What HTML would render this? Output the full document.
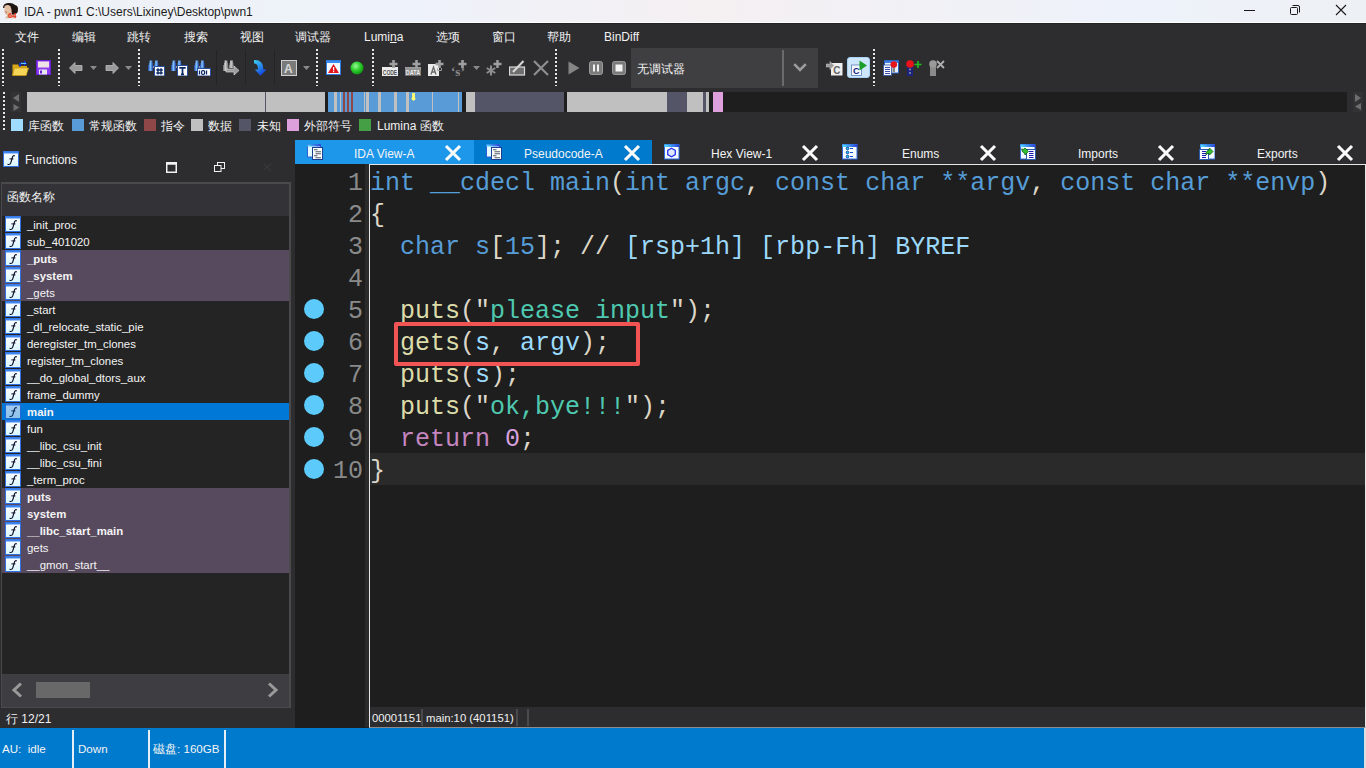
<!DOCTYPE html>
<html><head><meta charset="utf-8">
<style>
*{margin:0;padding:0;box-sizing:border-box}
html,body{width:1366px;height:768px;overflow:hidden;background:#2d2d30;font-family:"Liberation Sans",sans-serif;color:#f0f0f0;position:relative}
.a{position:absolute}
svg{position:absolute;display:block}
#title{left:0;top:0;width:1366px;height:23px;background:linear-gradient(90deg,#eef2f6 0%,#eef2fa 30%,#f5f0f2 52%,#f1f1f6 68%,#eef2fa 82%,#edf1f5 100%);border-bottom:1px solid #fdfdfd}
#tline{left:0;top:23px;width:1366px;height:1px;background:#232325}
.tt{top:5px;left:24px;font-size:12px;color:#1b1b1b;white-space:nowrap;line-height:14px}
.mi{position:absolute;top:30px;font-size:12px;line-height:14px;color:#f1f1f1;white-space:nowrap}
.dsep{position:absolute;width:2px;background:repeating-linear-gradient(180deg,#e6e6e6 0 2px,transparent 2px 4px)}
.lsep{position:absolute;width:1px;background:#232325}
.lg{position:absolute;top:119px;width:12px;height:12px}
.fn{font-size:11.4px;line-height:14px;color:#f4f4f4;white-space:nowrap}
.ln{left:295px;width:70px;text-align:right;font-family:"Liberation Mono",monospace;font-size:25px;line-height:32px;color:#8a8a8a;padding-right:2px}
.cl{left:370px;font-family:"Liberation Mono",monospace;font-size:25px;line-height:32px;white-space:pre}
.tabt{top:147px;font-size:12px;line-height:14px;color:#f4f4f4;white-space:nowrap}
.st2{font-size:11.3px;line-height:14px;color:#f1f1f1;white-space:nowrap}
.sbt{top:742px;font-size:11.6px;line-height:14px;color:#f4f4f4;white-space:nowrap}
.lt{position:absolute;top:119px;font-size:12px;line-height:14px;color:#f1f1f1;white-space:nowrap}
</style></head><body>
<!-- TITLE BAR -->
<div id="title" class="a"></div><div id="tline" class="a"></div>
<svg style="left:0px;top:0px" width="22" height="22" viewBox="0 0 22 22">
  <path d="M3 8 Q3 3.5 8 3 Q13 2.5 15 5 Q18 5.5 18 9 Q18.5 12 16 14 L12 15 Q11 9 9 7 Z" fill="#1e1412"/>
  <path d="M4.5 6 Q8 4 10.5 6.5 Q12 10 11.5 13 Q10.5 15.5 8 15.5 Q5 15 4.5 12 Z" fill="#e3c0a4"/>
  <path d="M5.5 11.5 Q6 12.8 7 12.3" stroke="#a0504a" stroke-width="0.9" fill="none"/>
  <path d="M5 18.5 Q9 17.5 16 18.5 L16 15 L8 14 Z" fill="#d9b59c"/>
  <text x="8" y="18" font-size="7.5" fill="#e8341f" font-family="Liberation Sans" font-weight="700">64</text>
</svg>
<div class="a tt">IDA - pwn1 C:\Users\Lixiney\Desktop\pwn1</div>
<svg style="left:1244px;top:10px" width="12" height="2"><rect x="0" y="0" width="11" height="1" fill="#1a1a1a"/></svg>
<svg style="left:1289px;top:4px" width="12" height="12" viewBox="0 0 12 12"><rect x="1.5" y="3.5" width="7" height="7" rx="1" fill="none" stroke="#1a1a1a" stroke-width="1"/><path d="M3.5 1.5 H9 Q10.5 1.5 10.5 3 V8.5" fill="none" stroke="#1a1a1a" stroke-width="1"/></svg>
<svg style="left:1335px;top:4px" width="12" height="12" viewBox="0 0 12 12"><path d="M1 1 L11 11 M11 1 L1 11" stroke="#1a1a1a" stroke-width="1.1"/></svg>

<!-- MENU -->
<div class="mi" style="left:15px">文件</div>
<div class="mi" style="left:72px">编辑</div>
<div class="mi" style="left:127px">跳转</div>
<div class="mi" style="left:184px">搜索</div>
<div class="mi" style="left:240px">视图</div>
<div class="mi" style="left:295px">调试器</div>
<div class="mi" style="left:364px">Lumi<u style="text-underline-offset:1px">n</u>a</div>
<div class="mi" style="left:436px">选项</div>
<div class="mi" style="left:492px">窗口</div>
<div class="mi" style="left:547px">帮助</div>
<div class="mi" style="left:604px">BinDiff</div>

<!-- TOOLBAR -->
<div class="dsep" style="left:2px;top:49px;height:37px"></div>
<div class="dsep" style="left:58px;top:49px;height:37px"></div>
<div class="dsep" style="left:138px;top:49px;height:37px"></div>
<div class="dsep" style="left:316px;top:49px;height:37px"></div>
<div class="dsep" style="left:372px;top:49px;height:37px"></div>
<div class="dsep" style="left:555px;top:49px;height:37px"></div>
<div class="dsep" style="left:873px;top:49px;height:37px"></div>
<div class="lsep" style="left:216px;top:50px;height:35px"></div>
<div class="lsep" style="left:245px;top:50px;height:35px"></div>
<div class="lsep" style="left:274px;top:50px;height:35px"></div>
<!-- folder -->
<svg style="left:12px;top:60px" width="17" height="16" viewBox="0 0 17 16">
 <path d="M0.5 4.5 H6.5 V6 H15 V15 H0.5 Z" fill="#d8a818"/>
 <path d="M2.5 8 H16.5 L14 15.5 H0.5 Z" fill="#f7d75a" stroke="#c99b12" stroke-width="0.8"/>
 <path d="M7.2 6.8 V3.6 Q7.2 2.6 8.5 2.6 H12 V0.3 L15.2 3.2 L12 6.2 V4.2 H9 V6.8 Z" fill="#1530d0"/><path d="M9 3.4 H14" stroke="#70f0ff" stroke-width="0.9"/>
</svg>
<!-- floppy -->
<svg style="left:36px;top:60px" width="16" height="16" viewBox="0 0 16 16">
 <rect x="0" y="0" width="15" height="15" fill="#6a1fd0"/>
 <rect x="1" y="1" width="13" height="13" fill="#8e3cf0"/>
 <rect x="2" y="1.5" width="11" height="6" fill="#efe2e6"/>
 <rect x="3" y="9.5" width="8" height="5" fill="#e8e8f0"/>
 <rect x="4" y="10.5" width="2" height="3" fill="#6a1fd0"/>
</svg>
<!-- back / fwd -->
<svg style="left:69px;top:62px" width="14" height="12" viewBox="0 0 14 12"><path d="M0.5 6 L6 0.5 V3.5 H13 V8.5 H6 V11.5 Z" fill="#9a9a9a" stroke="#bdbdbd" stroke-width="0.8"/></svg>
<svg style="left:90px;top:66px" width="8" height="5" viewBox="0 0 8 5"><path d="M0 0 H7 L3.5 4 Z" fill="#8a8a8a"/></svg>
<svg style="left:105px;top:62px" width="14" height="12" viewBox="0 0 14 12"><path d="M13.5 6 L8 0.5 V3.5 H1 V8.5 H8 V11.5 Z" fill="#9a9a9a" stroke="#bdbdbd" stroke-width="0.8"/></svg>
<svg style="left:125px;top:66px" width="8" height="5" viewBox="0 0 8 5"><path d="M0 0 H7 L3.5 4 Z" fill="#8a8a8a"/></svg>
<!-- binocular icons -->
<svg width="0" height="0" style="left:0;top:0"><defs>
<linearGradient id="bl" x1="0" y1="0" x2="1" y2="0"><stop offset="0" stop-color="#1c3aa0"/><stop offset="0.45" stop-color="#7fc8ff"/><stop offset="1" stop-color="#1a2f90"/></linearGradient>
<linearGradient id="bg2" x1="0" y1="0" x2="1" y2="0"><stop offset="0" stop-color="#6a6a6a"/><stop offset="0.45" stop-color="#d0d0d0"/><stop offset="1" stop-color="#707070"/></linearGradient>
<symbol id="bino" viewBox="0 0 17 16">
<path d="M1.5 0.5 H4.5 V3 H5 V5 H5.2 V11 H0 V5 H1 V3 H1.5 Z" fill="url(#bl)"/>
<path d="M7 0.5 H10 V3 H10.5 V5 H10.8 V8 H5.8 V5 H6.5 V3 H7 Z" fill="url(#bl)"/>
<rect x="5" y="6.5" width="1" height="1" fill="#f0f0f0"/>
</symbol>
<symbol id="binog" viewBox="0 0 17 16">
<path d="M1.5 0.5 H4.5 V3 H5 V5 H5.2 V11 H0 V5 H1 V3 H1.5 Z" fill="url(#bg2)"/>
<path d="M7 0.5 H10 V3 H10.5 V5 H10.8 V8 H5.8 V5 H6.5 V3 H7 Z" fill="url(#bg2)"/>
</symbol></defs></svg>
<svg style="left:148px;top:60px" width="17" height="16" viewBox="0 0 17 16">
 <use href="#bino" width="17" height="16"/>
 <rect x="6.5" y="6.5" width="10" height="9.5" fill="#fff" stroke="#2a4f9a"/>
 <path d="M10 8.3 V14.5 M13 8.3 V14.5 M8.3 10 H14.8 M8.3 13 H14.8" stroke="#0e2a66" stroke-width="1.4"/>
</svg>
<svg style="left:171px;top:60px" width="17" height="16" viewBox="0 0 17 16">
 <use href="#bino" width="17" height="16"/>
 <rect x="6.5" y="5.5" width="10" height="10.5" fill="#fff" stroke="#2a4f9a"/>
 <path d="M8.3 7.8 H14.7 M11.5 7.8 V14.3 M10 14.3 H13" stroke="#0e2a66" stroke-width="1.7"/>
</svg>
<svg style="left:194px;top:60px" width="17" height="16" viewBox="0 0 17 16">
 <use href="#bino" width="17" height="16"/>
 <rect x="3.5" y="8.5" width="13" height="7.5" fill="#fff" stroke="#2a4f9a"/>
 <path d="M5.5 10.5 V14.5 M12.5 10.5 V14.5" stroke="#0e2a66" stroke-width="1.3"/>
 <rect x="7.6" y="10.6" width="3" height="3.8" rx="1.2" fill="none" stroke="#0e2a66" stroke-width="1.2"/>
</svg>
<svg style="left:223px;top:60px" width="17" height="16" viewBox="0 0 17 16">
 <use href="#binog" width="17" height="16"/>
 <path d="M3 9 H11 V6 L16 10.5 L11 15 V12 H3 Z" fill="#9c9c9c" stroke="#d0d0d0" stroke-width="0.7"/>
</svg>
<!-- blue curved arrow -->
<svg style="left:253px;top:59px" width="15" height="18" viewBox="0 0 15 18">
 <defs><linearGradient id="ba" x1="0" y1="0" x2="0.6" y2="1"><stop offset="0" stop-color="#3fd0f0"/><stop offset="0.5" stop-color="#2a8ae8"/><stop offset="1" stop-color="#1040e0"/></linearGradient></defs>
 <path d="M1 1 Q10.5 0.5 10.5 10.5 L13.5 10.5 L7.5 16.8 L1.8 10.5 L5 10.5 Q5 4 1 4.5 Z" fill="url(#ba)"/>
</svg>
<!-- A box -->
<svg style="left:281px;top:60px" width="17" height="16" viewBox="0 0 17 16">
 <rect x="0.5" y="0.5" width="15" height="15" fill="#7a7a7a" stroke="#cfcfcf"/>
 <text x="3" y="13" font-size="12" font-weight="700" fill="#d8d8d8" font-family="Liberation Sans">A</text>
</svg>
<svg style="left:303px;top:66px" width="8" height="5" viewBox="0 0 8 5"><path d="M0 0 H7 L3.5 4 Z" fill="#8a8a8a"/></svg>
<!-- warning window -->
<svg style="left:326px;top:60px" width="16" height="16" viewBox="0 0 16 16">
 <rect x="0.5" y="0.5" width="14" height="14" fill="#f2f8ff" stroke="#2f7ce0"/>
 <rect x="1" y="1" width="13" height="2" fill="#3a8cf0"/>
 <path d="M7.5 4 L13 13 H2 Z" fill="#e0161b"/>
 <rect x="7" y="7" width="1.2" height="3.5" fill="#fff"/><rect x="7" y="11" width="1.2" height="1.2" fill="#fff"/>
</svg>
<!-- green ball -->
<svg style="left:350px;top:61px" width="14" height="14" viewBox="0 0 14 14">
 <defs><radialGradient id="gb" cx="0.4" cy="0.35" r="0.7"><stop offset="0" stop-color="#9af79a"/><stop offset="0.5" stop-color="#2dcf2d"/><stop offset="1" stop-color="#0e8a10"/></radialGradient></defs>
 <circle cx="7" cy="7" r="6.5" fill="url(#gb)"/>
</svg>
<!-- CODE+ DATA+ -->
<svg style="left:382px;top:60px" width="17" height="16" viewBox="0 0 17 16">
 <rect x="0" y="7" width="16" height="9" fill="#ececec"/>
 <text x="0.8" y="14.6" font-size="8" font-weight="700" fill="#505050" font-family="Liberation Sans" textLength="14.4" lengthAdjust="spacingAndGlyphs">CODE</text>
 <path d="M11.5 0 V8 M7.5 4 H15.5" stroke="#a0a0a0" stroke-width="2.6"/>
</svg>
<svg style="left:405px;top:60px" width="17" height="16" viewBox="0 0 17 16">
 <defs><linearGradient id="dg" x1="0" y1="0" x2="0" y2="1"><stop offset="0" stop-color="#a0a0a0"/><stop offset="1" stop-color="#6a6a6a"/></linearGradient></defs>
 <rect x="0" y="7" width="16" height="9" fill="url(#dg)"/>
 <text x="0.8" y="14.6" font-size="8" font-weight="700" fill="#f0f0f0" font-family="Liberation Sans" textLength="14.4" lengthAdjust="spacingAndGlyphs">DATA</text>
 <path d="M11.5 0 V8 M7.5 4 H15.5" stroke="#a0a0a0" stroke-width="2.6"/>
</svg>
<!-- A+ -->
<svg style="left:428px;top:60px" width="17" height="16" viewBox="0 0 17 16">
 <rect x="0" y="4" width="11" height="12" fill="#ececec"/>
 <path d="M3 14.5 L5.5 7 L8 14.5 M4 12 H7" stroke="#6a6a6a" stroke-width="1.3" fill="none"/>
 <path d="M11.5 0 V8 M7.5 4 H15.5" stroke="#a0a0a0" stroke-width="2.6"/>
 <path d="M9.5 8.5 V10.5 H13.5 V8" stroke="#9a9a9a" stroke-width="1" fill="none"/>
</svg>
<!-- 's'+ -->
<svg style="left:451px;top:60px" width="17" height="16" viewBox="0 0 17 16">
 <text x="0" y="15.5" font-size="13" font-weight="700" fill="#8c8c8c" font-family="Liberation Serif">‘s’</text>
 <path d="M11.5 0 V8 M7.5 4 H15.5" stroke="#a0a0a0" stroke-width="2.6"/>
</svg>
<svg style="left:473px;top:66px" width="8" height="5" viewBox="0 0 8 5"><path d="M0 0 H7 L3.5 4 Z" fill="#8a8a8a"/></svg>
<!-- *+ -->
<svg style="left:486px;top:60px" width="17" height="16" viewBox="0 0 17 16">
 <path d="M5 5.5 V15.5 M0.7 8 L9.3 13 M0.7 13 L9.3 8" stroke="#8e8e8e" stroke-width="2"/>
 <path d="M11.5 0 V8 M7.5 4 H15.5" stroke="#a0a0a0" stroke-width="2.4"/>
</svg>
<!-- edit -->
<svg style="left:509px;top:60px" width="17" height="16" viewBox="0 0 17 16">
 <rect x="0.5" y="7" width="15" height="8" fill="#6e6e6e" stroke="#dadada" stroke-width="1.2"/>
 <path d="M4 12 L14.5 1" stroke="#d8d8d8" stroke-width="2"/>
</svg>
<!-- X -->
<svg style="left:533px;top:60px" width="16" height="16" viewBox="0 0 16 16"><path d="M1 1 L15 15 M15 1 L1 15" stroke="#8e8e8e" stroke-width="2.2"/></svg>
<!-- play pause stop -->
<svg style="left:568px;top:61px" width="12" height="14" viewBox="0 0 12 14"><path d="M0.5 0.5 L11.5 7 L0.5 13.5 Z" fill="#858585"/></svg>
<svg style="left:589px;top:61px" width="14" height="14" viewBox="0 0 14 14"><rect x="0.5" y="0.5" width="13" height="13" rx="2" fill="#7a7a7a" stroke="#9a9a9a"/><rect x="4" y="3.5" width="2" height="7" fill="#f0f0f0"/><rect x="8" y="3.5" width="2" height="7" fill="#f0f0f0"/></svg>
<svg style="left:612px;top:61px" width="14" height="14" viewBox="0 0 14 14"><rect x="0.5" y="0.5" width="13" height="13" rx="2" fill="#7a7a7a" stroke="#9a9a9a"/><rect x="3.5" y="3.5" width="7" height="7" fill="#f4f4f4"/></svg>
<!-- debugger combo -->
<div class="a" style="left:631px;top:48px;width:187px;height:40px;background:#3f3f41"></div>
<div class="a" style="left:782px;top:50px;width:2px;height:36px;background:#6a6a6a"></div>
<div class="a" style="left:637px;top:62px;font-size:12px;line-height:14px;color:#f1f1f1">无调试器</div>
<svg style="left:793px;top:63px" width="14" height="9" viewBox="0 0 14 9"><path d="M1.2 1.2 L7 7 L12.8 1.2" stroke="#9c9c9c" stroke-width="2.6" fill="none"/></svg>
<!-- right icons -->
<svg style="left:826px;top:60px" width="18" height="16" viewBox="0 0 18 16">
 <rect x="5" y="3" width="11.5" height="12.5" fill="#eeeeee"/>
 <text x="7.3" y="13.5" font-size="10" font-weight="700" fill="#666" font-family="Liberation Sans">C</text>
 <path d="M0 4 H4 V1.5 L8 5.5 L4 9.5 V7 H0 Z" fill="#9a9a9a" stroke="#cacaca" stroke-width="0.5"/>
</svg>
<div class="a" style="left:847px;top:57px;width:23px;height:21px;background:#cde6fb;border-radius:3px;border:1px solid #a9d2f4"></div>
<svg style="left:850px;top:60px" width="18" height="16" viewBox="0 0 18 16">
 <rect x="1.5" y="5" width="10" height="10.5" fill="#f4f8ff" stroke="#5a7fb8" stroke-width="0.8"/>
 <text x="3" y="14" font-size="9" font-weight="700" fill="#101c80" font-family="Liberation Sans">C</text>
 <path d="M9.5 0.5 L17 5.5 L9.5 10.5 Z" fill="#1aa028"/>
</svg>
<svg style="left:883px;top:60px" width="17" height="16" viewBox="0 0 17 16">
 <rect x="1.5" y="0.5" width="14" height="12.5" fill="#e6f0ff" stroke="#2d63c0"/>
 <rect x="2" y="1" width="13" height="2" fill="#3d7fe0"/>
 <rect x="0.5" y="5" width="8" height="10.5" fill="#f8f8ff" stroke="#2d4fa0" stroke-width="0.8"/>
 <path d="M2 7.5 H7 M2 9.5 H7 M2 11.5 H7 M2 13.5 H7" stroke="#2438a0" stroke-width="0.9"/>
 <rect x="9.5" y="6" width="2.5" height="6" fill="#888"/>
 <circle cx="10.8" cy="4.5" r="3.3" fill="#e8141a"/>
</svg>
<svg style="left:906px;top:60px" width="17" height="16" viewBox="0 0 17 16">
 <rect x="1" y="6" width="6" height="10" fill="#1a237e"/>
 <circle cx="4" cy="9.5" r="1" fill="#999"/><circle cx="4" cy="13" r="1" fill="#999"/>
 <circle cx="4" cy="4" r="3.8" fill="#e8141a"/>
 <path d="M12 1 V8 M8.5 4.5 H15.5" stroke="#22c022" stroke-width="1.6"/>
</svg>
<svg style="left:929px;top:60px" width="17" height="16" viewBox="0 0 17 16">
 <rect x="1" y="6" width="6" height="10" fill="#8a8a8a"/>
 <circle cx="4" cy="4" r="3.8" fill="#9a9a9a"/>
 <path d="M8 1 L15 8 M15 1 L8 8" stroke="#b0b0b0" stroke-width="1.8"/>
</svg>


<!-- NAV -->
<div class="dsep" style="left:3px;top:92px;height:38px"></div>
<div class="a" style="left:11px;top:92px;width:10px;height:20px;background:#333336"></div>
<svg style="left:12px;top:93px" width="8" height="18" viewBox="0 0 8 18"><path d="M7 1 L1 5 L7 9 Z" fill="#6e6e70"/><path d="M1.5 11 L7.5 14.5 L1.5 18 Z" fill="#6e6e70"/></svg>
<div class="a" style="left:27px;top:92px;width:1320px;height:20px;background:#1e1e1e"></div>
<div class="a" style="left:27px;top:92px;width:298px;height:20px;background:#c0c0c0"></div>
<div class="a" style="left:265px;top:92px;width:1px;height:20px;background:#555568"></div>
<div class="a" style="left:328px;top:92px;width:134px;height:20px;background:#589bd6"></div>
<div class="a" style="left:334px;top:92px;width:3px;height:20px;background:#c0c0c0"></div>
<div class="a" style="left:340px;top:92px;width:1px;height:20px;background:#c0c0c0"></div>
<div class="a" style="left:343px;top:92px;width:2px;height:20px;background:#8f4747"></div>
<div class="a" style="left:347px;top:92px;width:2px;height:20px;background:#8f4747"></div>
<div class="a" style="left:351px;top:92px;width:2px;height:20px;background:#8f4747"></div>
<div class="a" style="left:364px;top:92px;width:1px;height:20px;background:#c0c0c0"></div>
<div class="a" style="left:366px;top:92px;width:3px;height:20px;background:#c0c0c0"></div>
<div class="a" style="left:378px;top:92px;width:3px;height:20px;background:#c0c0c0"></div>
<div class="a" style="left:394px;top:92px;width:3px;height:20px;background:#c0c0c0"></div>
<div class="a" style="left:406px;top:92px;width:3px;height:20px;background:#c0c0c0"></div>
<div class="a" style="left:432px;top:92px;width:1px;height:20px;background:#c0c0c0"></div>
<div class="a" style="left:458px;top:92px;width:1px;height:20px;background:#c0c0c0"></div>
<svg style="left:410px;top:93px" width="7" height="9" viewBox="0 0 7 9"><path d="M2.1 0 H4.9 V5.4 H6.2 L3.5 8 L0.8 5.4 H2.1 Z" fill="#ffff6e"/></svg>
<div class="a" style="left:466px;top:92px;width:9px;height:20px;background:#c0c0c0"></div>
<div class="a" style="left:475px;top:92px;width:89px;height:20px;background:#555568"></div>
<div class="a" style="left:567px;top:92px;width:100px;height:20px;background:#c0c0c0"></div>
<div class="a" style="left:667px;top:92px;width:20px;height:20px;background:#555568"></div>
<div class="a" style="left:687px;top:92px;width:16px;height:20px;background:#c0c0c0"></div>
<div class="a" style="left:703px;top:92px;width:3px;height:20px;background:#555568"></div>
<div class="a" style="left:706px;top:92px;width:3px;height:20px;background:#c0c0c0"></div>
<div class="a" style="left:713px;top:92px;width:10px;height:20px;background:#dda0dd"></div>
<div class="a" style="left:1353px;top:92px;width:10px;height:20px;background:#333336"></div>
<svg style="left:1354px;top:93px" width="8" height="18" viewBox="0 0 8 18"><path d="M1 1 L7 5 L1 9 Z" fill="#6e6e70"/><path d="M7 10 L1 13.5 L7 17 Z" fill="#6e6e70"/></svg>


<!-- LEGEND -->
<div class="lg" style="left:11px;background:#9fdcff"></div><div class="lt" style="left:28px">库函数</div>
<div class="lg" style="left:72px;background:#589bd6"></div><div class="lt" style="left:89px">常规函数</div>
<div class="lg" style="left:144px;background:#8f4747"></div><div class="lt" style="left:161px">指令</div>
<div class="lg" style="left:191px;background:#c0c0c0"></div><div class="lt" style="left:208px">数据</div>
<div class="lg" style="left:239px;background:#555568"></div><div class="lt" style="left:257px">未知</div>
<div class="lg" style="left:287px;background:#dda0dd"></div><div class="lt" style="left:304px">外部符号</div>
<div class="lg" style="left:359px;background:#45a045"></div><div class="lt" style="left:377px">Lumina 函数</div>


<!-- FUNCTIONS -->
<svg width="0" height="0" style="left:0;top:0"><defs>
<linearGradient id="fi" x1="0" y1="0" x2="0" y2="1"><stop offset="0" stop-color="#ffffff"/><stop offset="1" stop-color="#d8f6ff"/></linearGradient>
<symbol id="ficon" viewBox="0 0 16 16">
<rect x="0.5" y="0.5" width="15" height="15" fill="url(#fi)" stroke="#2f6fe0"/>
<rect x="1" y="0.5" width="14" height="2" fill="#3f86f0"/>
<path d="M11.8 4.9 Q10.4 4.1 9.6 5.8 L7.7 12.1 Q7.1 13.9 4.6 13.4" fill="none" stroke="#0b0b25" stroke-width="1.15"/>
<path d="M6.4 7.9 H10.4" stroke="#0b0b25" stroke-width="1"/>
</symbol></defs></svg>
<svg style="left:3px;top:151px" width="16" height="16"><use href="#ficon"/></svg>
<div class="a" style="left:25px;top:153px;font-size:12px;line-height:14px;color:#f1f1f1">Functions</div>
<svg style="left:166px;top:162px" width="11" height="11" viewBox="0 0 11 11"><rect x="0.75" y="0.75" width="9.5" height="9.5" fill="none" stroke="#f2f2f2" stroke-width="1.5"/><rect x="0.75" y="0.75" width="9.5" height="2" fill="#f2f2f2"/></svg>
<svg style="left:214px;top:162px" width="11" height="10" viewBox="0 0 11 10"><rect x="3.5" y="0.5" width="7" height="6" fill="none" stroke="#f2f2f2" stroke-width="1"/><rect x="0.5" y="3.5" width="6.5" height="6" fill="#2d2d30" stroke="#f2f2f2" stroke-width="1"/></svg>
<svg style="left:263px;top:163px" width="9" height="8" viewBox="0 0 9 8"><path d="M0.5 0.5 L8 7.5 M8 0.5 L0.5 7.5" stroke="#3e3e42" stroke-width="1"/></svg>
<div class="a" style="left:1px;top:182px;width:290px;height:526px;background:#4a4a4c"></div>
<div class="a" style="left:2px;top:184px;width:287px;height:490px;background:#242424"></div>
<div class="a" style="left:2px;top:184px;width:287px;height:32px;background:#333337"></div>
<div class="a" style="left:7px;top:190px;font-size:12px;line-height:14px;color:#f1f1f1">函数名称</div>

<svg style="left:5px;top:216px" width="16" height="16"><use href="#ficon"/></svg>
<div class="a fn" style="left:27px;top:218px;">_init_proc</div>
<svg style="left:5px;top:233px" width="16" height="16"><use href="#ficon"/></svg>
<div class="a fn" style="left:27px;top:235px;">sub_401020</div>
<div class="a" style="left:2px;top:250px;width:287px;height:17px;background:#574a5e"></div>
<svg style="left:5px;top:250px" width="16" height="16"><use href="#ficon"/></svg>
<div class="a fn" style="left:27px;top:252px;font-weight:700;">_puts</div>
<div class="a" style="left:2px;top:267px;width:287px;height:17px;background:#574a5e"></div>
<svg style="left:5px;top:267px" width="16" height="16"><use href="#ficon"/></svg>
<div class="a fn" style="left:27px;top:269px;font-weight:700;">_system</div>
<div class="a" style="left:2px;top:284px;width:287px;height:17px;background:#574a5e"></div>
<svg style="left:5px;top:284px" width="16" height="16"><use href="#ficon"/></svg>
<div class="a fn" style="left:27px;top:286px;">_gets</div>
<svg style="left:5px;top:301px" width="16" height="16"><use href="#ficon"/></svg>
<div class="a fn" style="left:27px;top:303px;">_start</div>
<svg style="left:5px;top:318px" width="16" height="16"><use href="#ficon"/></svg>
<div class="a fn" style="left:27px;top:320px;">_dl_relocate_static_pie</div>
<svg style="left:5px;top:335px" width="16" height="16"><use href="#ficon"/></svg>
<div class="a fn" style="left:27px;top:337px;">deregister_tm_clones</div>
<svg style="left:5px;top:352px" width="16" height="16"><use href="#ficon"/></svg>
<div class="a fn" style="left:27px;top:354px;">register_tm_clones</div>
<svg style="left:5px;top:369px" width="16" height="16"><use href="#ficon"/></svg>
<div class="a fn" style="left:27px;top:371px;">__do_global_dtors_aux</div>
<svg style="left:5px;top:386px" width="16" height="16"><use href="#ficon"/></svg>
<div class="a fn" style="left:27px;top:388px;">frame_dummy</div>
<div class="a" style="left:2px;top:403px;width:287px;height:17px;background:#0078d7"></div>
<svg style="left:5px;top:403px" width="16" height="16"><use href="#ficon"/></svg>
<div class="a" style="left:5px;top:403px;width:16px;height:16px;background:rgba(0,100,200,0.35)"></div>
<div class="a fn" style="left:27px;top:405px;font-weight:700;">main</div>
<svg style="left:5px;top:420px" width="16" height="16"><use href="#ficon"/></svg>
<div class="a fn" style="left:27px;top:422px;">fun</div>
<svg style="left:5px;top:437px" width="16" height="16"><use href="#ficon"/></svg>
<div class="a fn" style="left:27px;top:439px;">__libc_csu_init</div>
<svg style="left:5px;top:454px" width="16" height="16"><use href="#ficon"/></svg>
<div class="a fn" style="left:27px;top:456px;">__libc_csu_fini</div>
<svg style="left:5px;top:471px" width="16" height="16"><use href="#ficon"/></svg>
<div class="a fn" style="left:27px;top:473px;">_term_proc</div>
<div class="a" style="left:2px;top:488px;width:287px;height:17px;background:#574a5e"></div>
<svg style="left:5px;top:488px" width="16" height="16"><use href="#ficon"/></svg>
<div class="a fn" style="left:27px;top:490px;font-weight:700;">puts</div>
<div class="a" style="left:2px;top:505px;width:287px;height:17px;background:#574a5e"></div>
<svg style="left:5px;top:505px" width="16" height="16"><use href="#ficon"/></svg>
<div class="a fn" style="left:27px;top:507px;font-weight:700;">system</div>
<div class="a" style="left:2px;top:522px;width:287px;height:17px;background:#574a5e"></div>
<svg style="left:5px;top:522px" width="16" height="16"><use href="#ficon"/></svg>
<div class="a fn" style="left:27px;top:524px;font-weight:700;">__libc_start_main</div>
<div class="a" style="left:2px;top:539px;width:287px;height:17px;background:#574a5e"></div>
<svg style="left:5px;top:539px" width="16" height="16"><use href="#ficon"/></svg>
<div class="a fn" style="left:27px;top:541px;">gets</div>
<div class="a" style="left:2px;top:556px;width:287px;height:17px;background:#574a5e"></div>
<svg style="left:5px;top:556px" width="16" height="16"><use href="#ficon"/></svg>
<div class="a fn" style="left:27px;top:558px;">__gmon_start__</div>
<div class="a" style="left:2px;top:674px;width:287px;height:33px;background:#3e3e42"></div>
<svg style="left:10px;top:682px" width="14" height="16" viewBox="0 0 14 16"><path d="M11 1.5 L4 8 L11 14.5" stroke="#9a9a9a" stroke-width="3" fill="none"/></svg>
<div class="a" style="left:36px;top:682px;width:54px;height:16px;background:#686868"></div>
<svg style="left:266px;top:682px" width="14" height="16" viewBox="0 0 14 16"><path d="M3 1.5 L10 8 L3 14.5" stroke="#9a9a9a" stroke-width="3" fill="none"/></svg>
<div class="a" style="left:6px;top:712px;font-size:12px;line-height:14px;color:#f1f1f1">行 12/21</div>


<!-- CODE -->
<div class="a" style="left:295px;top:164px;width:1071px;height:564px;background:#1e1e1e"></div>
<div class="a" style="left:365px;top:164px;width:4px;height:563px;background:#2b2b2b"></div>
<div class="a" style="left:369px;top:164px;width:997px;height:564px;border:1px solid #e6e6e6;border-bottom-color:#8c8c8c"></div>
<div class="a" style="left:370px;top:453px;width:995px;height:32px;background:#2a2a2a"></div>
<div class="a" style="left:370px;top:707px;width:995px;height:20px;background:#2d2d30"></div>
<div class="a st2" style="left:372px;top:711px">00001151</div>
<div class="a" style="left:421px;top:709px;width:2px;height:17px;background:#4a4a4c"></div>
<div class="a st2" style="left:426px;top:711px">main:10 (401151)</div>
<div class="a" style="left:516px;top:709px;width:2px;height:17px;background:#4a4a4c"></div>
<div class="a" style="left:527px;top:709px;width:2px;height:17px;background:#4a4a4c"></div>

<div class="a ln" style="top:168px">1</div>
<div class="a cl" style="top:168px"><span style="color:#569cd6">int __cdecl main</span><span style="color:#dcd6c8">(</span><span style="color:#569cd6">int argc</span><span style="color:#dcd6c8">,</span><span style="color:#569cd6"> const char **argv</span><span style="color:#dcd6c8">,</span><span style="color:#569cd6"> const char **envp</span><span style="color:#dcd6c8">)</span></div>
<div class="a ln" style="top:200px">2</div>
<div class="a cl" style="top:200px"><span style="color:#dcd6c8">{</span></div>
<div class="a ln" style="top:232px">3</div>
<div class="a cl" style="top:232px"><span style="color:#569cd6">  char s</span><span style="color:#dcd6c8">[</span><span style="color:#569cd6">15</span><span style="color:#dcd6c8">];</span><span style="color:#dcd6c8"> //</span><span style="color:#9cd8fa"> [rsp+1h] [rbp-Fh] BYREF</span></div>
<div class="a ln" style="top:264px">4</div>
<div class="a ln" style="top:296px">5</div>
<div class="a cl" style="top:296px"><span style="color:#dcdcaa">  puts</span><span style="color:#dcd6c8">("</span><span style="color:#4ec9b0">please input</span><span style="color:#dcd6c8">");</span></div>
<div class="a" style="left:304px;top:299px;width:20px;height:20px;border-radius:50%;background:#5ccafa"></div>
<div class="a ln" style="top:328px">6</div>
<div class="a cl" style="top:328px"><span style="color:#dcdcaa">  gets</span><span style="color:#dcd6c8">(</span><span style="color:#9cdcfe">s</span><span style="color:#dcd6c8">, </span><span style="color:#9cdcfe">argv</span><span style="color:#dcd6c8">);</span></div>
<div class="a" style="left:304px;top:331px;width:20px;height:20px;border-radius:50%;background:#5ccafa"></div>
<div class="a ln" style="top:360px">7</div>
<div class="a cl" style="top:360px"><span style="color:#dcdcaa">  puts</span><span style="color:#dcd6c8">(</span><span style="color:#9cdcfe">s</span><span style="color:#dcd6c8">);</span></div>
<div class="a" style="left:304px;top:363px;width:20px;height:20px;border-radius:50%;background:#5ccafa"></div>
<div class="a ln" style="top:392px">8</div>
<div class="a cl" style="top:392px"><span style="color:#dcdcaa">  puts</span><span style="color:#dcd6c8">("</span><span style="color:#4ec9b0">ok,bye!!!</span><span style="color:#dcd6c8">");</span></div>
<div class="a" style="left:304px;top:395px;width:20px;height:20px;border-radius:50%;background:#5ccafa"></div>
<div class="a ln" style="top:424px">9</div>
<div class="a cl" style="top:424px"><span style="color:#c586c0">  return </span><span style="color:#d8a0df">0</span><span style="color:#dcd6c8">;</span></div>
<div class="a" style="left:304px;top:427px;width:20px;height:20px;border-radius:50%;background:#5ccafa"></div>
<div class="a ln" style="top:456px">10</div>
<div class="a cl" style="top:456px"><span style="color:#dcd6c8">}</span></div>
<div class="a" style="left:304px;top:459px;width:20px;height:20px;border-radius:50%;background:#5ccafa"></div>
<div class="a" style="left:394px;top:322px;width:246px;height:44px;border:4px solid #f25353;border-radius:2px"></div>
<div class="a" style="left:295px;top:140px;width:179px;height:24px;background:#1c97ea"></div>
<div class="a" style="left:474px;top:140px;width:178px;height:24px;background:#007acc"></div>

<svg style="left:307px;top:144px" width="16" height="16"><use href="#ti_ida"/></svg>
<div class="a tabt" style="left:354px">IDA View-A</div>
<svg style="left:444px;top:144px" width="18" height="18" viewBox="0 0 18 18"><path d="M2 2 L16 16 M16 2 L2 16" stroke="#fafafa" stroke-width="3.1"/></svg>
<svg style="left:486px;top:144px" width="16" height="16"><use href="#ti_ida"/></svg>
<div class="a tabt" style="left:524px">Pseudocode-A</div>
<svg style="left:623px;top:144px" width="18" height="18" viewBox="0 0 18 18"><path d="M2 2 L16 16 M16 2 L2 16" stroke="#fafafa" stroke-width="3.1"/></svg>
<svg style="left:664px;top:144px" width="16" height="16"><use href="#ti_hex"/></svg>
<div class="a tabt" style="left:711px">Hex View-1</div>
<svg style="left:801px;top:144px" width="18" height="18" viewBox="0 0 18 18"><path d="M2 2 L16 16 M16 2 L2 16" stroke="#fafafa" stroke-width="3.1"/></svg>
<svg style="left:842px;top:144px" width="16" height="16"><use href="#ti_enum"/></svg>
<div class="a tabt" style="left:902px">Enums</div>
<svg style="left:979px;top:144px" width="18" height="18" viewBox="0 0 18 18"><path d="M2 2 L16 16 M16 2 L2 16" stroke="#fafafa" stroke-width="3.1"/></svg>
<svg style="left:1020px;top:144px" width="16" height="16"><use href="#ti_imp"/></svg>
<div class="a tabt" style="left:1078px">Imports</div>
<svg style="left:1157px;top:144px" width="18" height="18" viewBox="0 0 18 18"><path d="M2 2 L16 16 M16 2 L2 16" stroke="#fafafa" stroke-width="3.1"/></svg>
<svg style="left:1199px;top:144px" width="16" height="16"><use href="#ti_exp"/></svg>
<div class="a tabt" style="left:1257px">Exports</div>
<svg style="left:1336px;top:144px" width="18" height="18" viewBox="0 0 18 18"><path d="M2 2 L16 16 M16 2 L2 16" stroke="#fafafa" stroke-width="3.1"/></svg>
<svg width="0" height="0" style="left:0;top:0"><defs>
<symbol id="ti_ida" viewBox="0 0 16 16">
<linearGradient id="tg1" x1="0" y1="0" x2="1" y2="0"><stop offset="0" stop-color="#50e0ff"/><stop offset="1" stop-color="#2a3fd8"/></linearGradient>
<rect x="0.5" y="0.5" width="13" height="12.5" fill="#e6fbff" stroke="#3060d8"/>
<rect x="0.5" y="0.5" width="13" height="2" fill="url(#tg1)"/>
<rect x="5.5" y="3.5" width="10" height="12" fill="#fbfdff" stroke="#1a3f90"/>
<path d="M7 5.7 H10.5 M8.5 7.7 H14 M8.5 9.7 H14 M7 11.7 H10.5 M8.5 13.7 H14" stroke="#505860" stroke-width="1.1"/>
</symbol>
<symbol id="ti_hex" viewBox="0 0 16 16"><rect x="0.5" y="0.5" width="14.5" height="14.5" fill="#f2fcff" stroke="#2f6ae0"/><rect x="0.5" y="0.5" width="14.5" height="2.5" fill="url(#tg1)"/><path d="M7.5 4.3 L11.3 6.4 V10.6 L7.5 12.7 L3.7 10.6 V6.4 Z" fill="#dde8ff" stroke="#2a2ef0" stroke-width="1.3"/></symbol>
<symbol id="ti_enum" viewBox="0 0 16 16"><rect x="0.5" y="0.5" width="14.5" height="14.5" fill="#f2fcff" stroke="#2f6ae0"/><rect x="0.5" y="0.5" width="14.5" height="2.5" fill="url(#tg1)"/><g fill="#10d8f0" stroke="#0a2aa0" stroke-width="0.9"><circle cx="5.5" cy="4.5" r="1.3"/><circle cx="5.5" cy="8.5" r="1.3"/><circle cx="5.5" cy="12.5" r="1.3"/></g><path d="M8 4.5 H11 M8 8.5 H11 M8 12.5 H11" stroke="#1050d0" stroke-width="1.2"/></symbol>
<symbol id="ti_imp" viewBox="0 0 16 16"><rect x="0.5" y="0.5" width="14.5" height="14.5" fill="#f2fcff" stroke="#2f6ae0"/><rect x="0.5" y="0.5" width="14.5" height="2.5" fill="url(#tg1)"/><rect x="6.5" y="5.5" width="9" height="10" fill="#f8fbff" stroke="#2a5aa8"/><path d="M9 7.5 H13.5 M9 9.5 H13.5 M9 11.5 H13.5 M9 13.5 H13.5" stroke="#1a1ab0" stroke-width="1"/><path d="M1.5 5 Q4 6 5 4 L8.5 7.5 L5 11 L4.5 9 Q2.5 9 1.5 5 Z" fill="#30c030" stroke="#0a5010" stroke-width="0.7"/></symbol>
<symbol id="ti_exp" viewBox="0 0 16 16"><rect x="1.5" y="0.5" width="14.5" height="14.5" fill="#f2fcff" stroke="#2f6ae0"/><rect x="1.5" y="0.5" width="14.5" height="2.5" fill="url(#tg1)"/><rect x="0.5" y="5.5" width="9" height="10" fill="#f8fbff" stroke="#2a5aa8"/><path d="M3 7.5 H7 M3 9.5 H7 M3 11.5 H7 M3 13.5 H7" stroke="#1a1ab0" stroke-width="1"/><path d="M7 9 Q8 6 10 6 L10.5 4 L14 7.5 L10.5 11 L10 9.3 Q8 9 7 11 Z" fill="#30c030" stroke="#0a5010" stroke-width="0.7"/></symbol>
</defs></svg>

<!-- STATUS -->
<div class="a" style="left:0;top:728px;width:1366px;height:40px;background:#007acc"></div>
<div class="a" style="left:1364px;top:728px;width:2px;height:40px;background:#dedede"></div>
<div class="a" style="left:72px;top:730px;width:2px;height:38px;background:#e6eef6"></div>
<div class="a" style="left:148px;top:730px;width:2px;height:38px;background:#e6eef6"></div>
<div class="a" style="left:224px;top:730px;width:2px;height:38px;background:#e6eef6"></div>
<div class="a sbt" style="left:2px">AU: &nbsp;idle</div>
<div class="a sbt" style="left:78px">Down</div>
<div class="a sbt" style="left:153px">磁盘: 160GB</div>



</body></html>
